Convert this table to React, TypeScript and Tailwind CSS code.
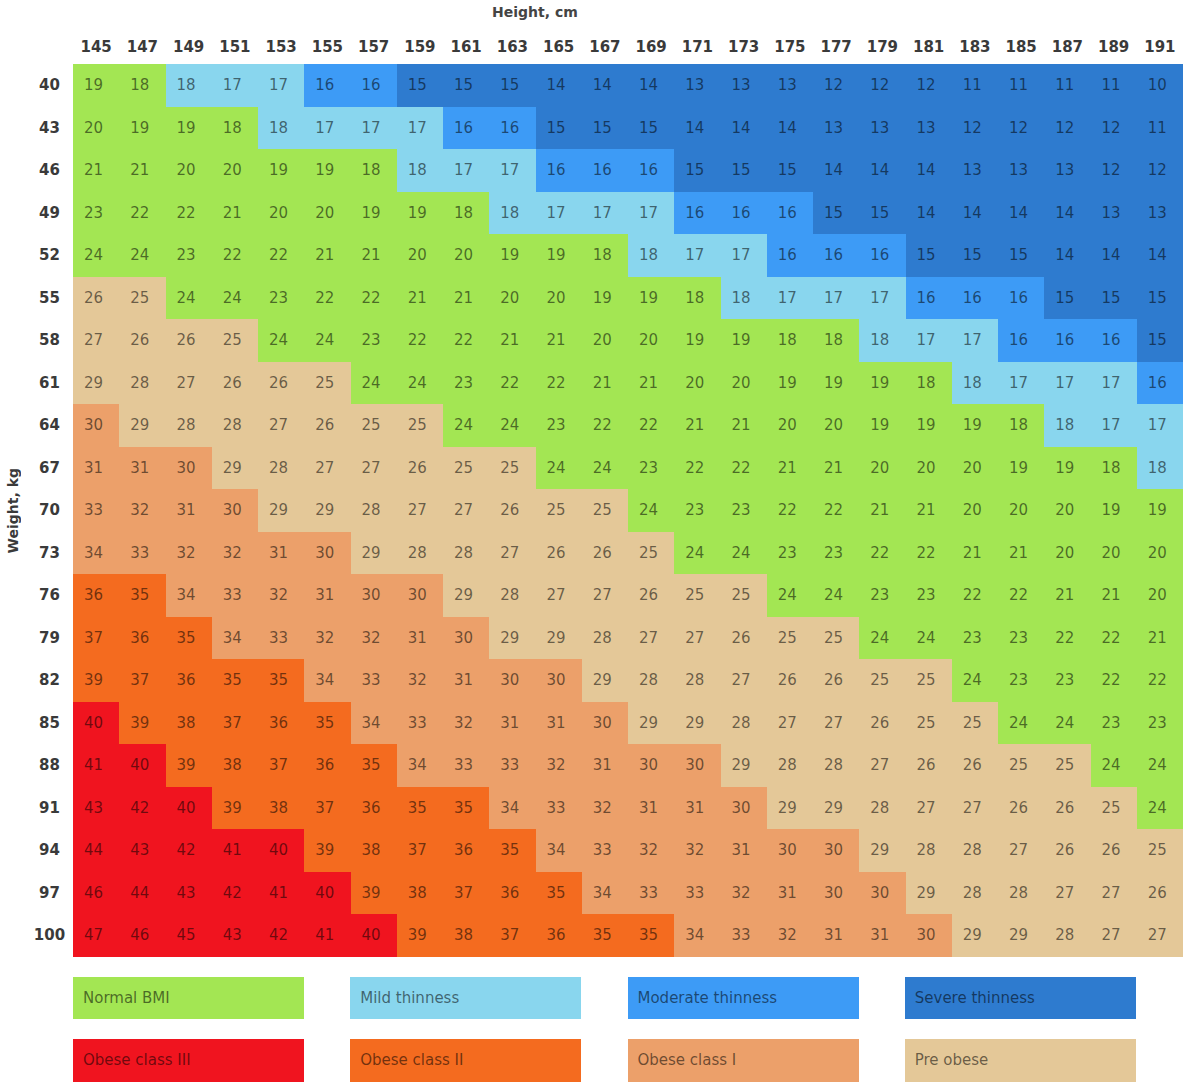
const heights = Array.from({ length: 24 }, (_, i) => 145 + i * 2);
const weights = Array.from({ length: 21 }, (_, i) => 40 + i * 3);

// colour by exact BMI, label shows the floored value
const bandOf = (bmi: number) => {
  if (bmi < 16) return "bg-[#2e7bcf]";
  if (bmi < 17) return "bg-[#3d9bf6]";
  if (bmi < 18.5) return "bg-[#89d6ee]";
  if (bmi < 25) return "bg-[#a3e653]";
  if (bmi < 30) return "bg-[#e4c898]";
  if (bmi < 35) return "bg-[#eca06a]";
  if (bmi < 40) return "bg-[#f46b1f]";
  return "bg-[#f0141f]";
};

const legend = [
  { label: "Normal BMI", color: "bg-[#a3e653]" },
  { label: "Mild thinness", color: "bg-[#89d6ee]" },
  { label: "Moderate thinness", color: "bg-[#3d9bf6]" },
  { label: "Severe thinness", color: "bg-[#2e7bcf]" },
  { label: "Obese class III", color: "bg-[#f0141f]" },
  { label: "Obese class II", color: "bg-[#f46b1f]" },
  { label: "Obese class I", color: "bg-[#eca06a]" },
  { label: "Pre obese", color: "bg-[#e4c898]" },
];

const App = () => {
  return (
    <div className="w-[1190px] h-[1089px] bg-white font-['DejaVu_Sans',Verdana,sans-serif] text-[#333]">
      <div className="h-[24px] flex items-center pl-[492px] text-[14px] font-bold text-[#444]">
        Height, cm
      </div>

      <div className="flex h-[40px] items-end pb-[8px] pl-[73px]">
        {heights.map((h) => (
          <div key={h} className="w-[46.25px] text-center text-[15px] font-bold leading-[18px] text-[#3a3a3a]">
            {h}
          </div>
        ))}
      </div>

      <div className="flex">
        <div className="w-[26px] flex items-center justify-center">
          <span className="[writing-mode:vertical-rl] rotate-180 text-[14px] font-bold text-[#3a3a3a] whitespace-nowrap">
            Weight, kg
          </span>
        </div>
        <div className="flex flex-col">
          {weights.map((w) => (
            <div key={w} className="flex h-[42.5px]">
              <div className="w-[47px] flex items-center justify-center text-[15px] font-bold text-[#3a3a3a]">
                {w}
              </div>
              {heights.map((h) => {
                const bmi = w / ((h / 100) * (h / 100));
                return (
                  <div
                    key={h}
                    className={`w-[46.25px] flex items-center justify-center pr-[5px] text-[15px] text-black/55 ${bandOf(bmi)}`}
                  >
                    {Math.floor(bmi)}
                  </div>
                );
              })}
            </div>
          ))}
        </div>
      </div>

      <div className="ml-[73px] mt-[20px] grid grid-cols-[repeat(4,231px)] gap-x-[46.25px] gap-y-[20px]">
        {legend.map((item) => (
          <div key={item.label} className={`h-[42.5px] flex items-center pl-[10px] text-[15px] text-black/55 ${item.color}`}>
            {item.label}
          </div>
        ))}
      </div>
    </div>
  );
};

export default App;
